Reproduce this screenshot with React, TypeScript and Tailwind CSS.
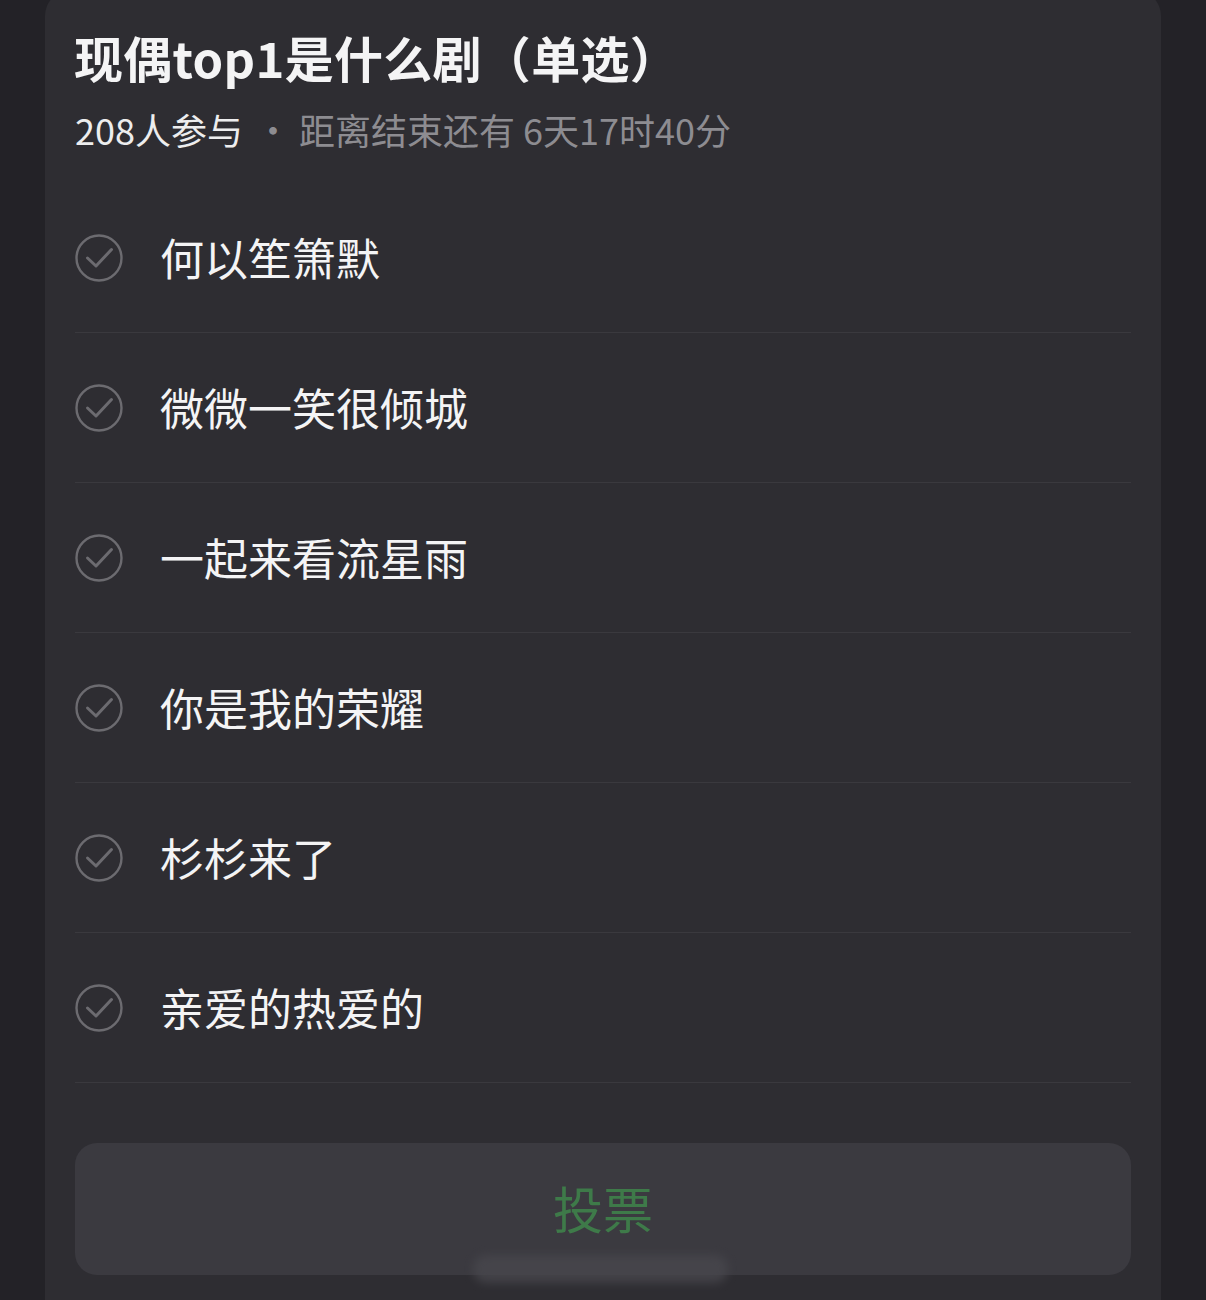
import React from "react";

const options = ["何以笙箫默", "微微一笑很倾城", "一起来看流星雨", "你是我的荣耀", "杉杉来了", "亲爱的热爱的"];

function CheckCircle() {
  return (
    <svg width="48" height="48" viewBox="0 0 48 48" fill="none">
      <circle cx="24" cy="24" r="22.5" stroke="#6c6b70" strokeWidth="2.4" />
      <path d="M12.5 24 L21 32 L36.5 15.5" stroke="#6c6b70" strokeWidth="3" strokeLinecap="round" strokeLinejoin="round" />
    </svg>
  );
}

export default function App() {
  return (
    <div
      className="w-[1206px] h-[1300px] overflow-hidden bg-[#232227] flex"
      style={{ fontFamily: '"Noto Sans CJK SC", "Noto Sans", sans-serif' }}
    >
      <div className="ml-[45px] w-[1116px] mt-[-10px] h-[1320px] bg-[#2e2d32] rounded-t-[26px] px-[30px] pt-[35px] flex flex-col">
        <div className="text-[49px] leading-[64px] font-bold text-[#f4f4f5] ml-[-1px] tracking-[0.3px]">现偶top1是什么剧（单选）</div>
        <div className="mt-[18px] text-[36px] leading-[44px] flex items-center">
          <span className="text-[#ededee]">208人参与</span>
          <span className="text-[#8d8c91] ml-[12px]">·</span>
          <span className="text-[#8d8c91] ml-[8px]">距离结束还有 6天17时40分</span>
        </div>
        <div className="mt-[32px] flex flex-col">
          {options.map((o) => (
            <div key={o} className="h-[150px] border-b border-[#3a393e] flex items-center">
              <div className="w-[48px] h-[48px]">
                <CheckCircle />
              </div>
              <span className="ml-[37px] text-[44px] leading-[60px] text-[#f4f4f5] mt-[-2px]">{o}</span>
            </div>
          ))}
        </div>
        <div className="mt-[60px] h-[132px] rounded-[22px] bg-[#3b3a40] flex items-center justify-center relative">
          <span className="text-[50px] leading-[60px] text-[#3e7a49] mt-[-4px]">投票</span>
          <div className="absolute left-[398px] top-[112px] w-[255px] h-[28px] rounded-full bg-[#48474d] blur-[5px] opacity-80" />
        </div>
      </div>
    </div>
  );
}
